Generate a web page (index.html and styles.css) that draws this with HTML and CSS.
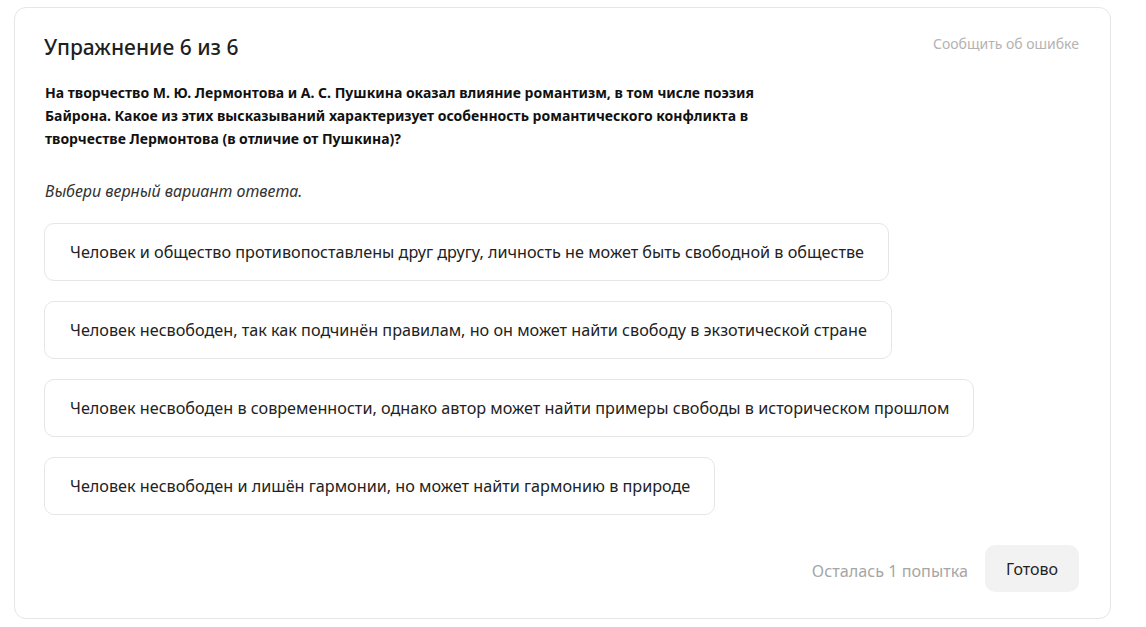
FILE: index.html
```html
<!DOCTYPE html>
<html lang="ru">
<head>
    <meta charset="UTF-8">
    <meta name="viewport" content="width=device-width, initial-scale=1.0">
    <title>Упражнение 6 из 6</title>
    <link rel="stylesheet" href="styles.css">
</head>
<body>
    <div class="card">
        <div class="card-head">
            <h1 class="title">Упражнение 6 из 6</h1>
            <a class="report" href="#">Сообщить об ошибке</a>
        </div>

        <p class="question">На творчество М. Ю. Лермонтова и А. С. Пушкина оказал влияние романтизм, в том числе поэзия Байрона. Какое из этих высказываний характеризует особенность романтического конфликта в творчестве Лермонтова (в отличие от Пушкина)?</p>

        <p class="hint">Выбери верный вариант ответа.</p>

        <div class="options">
            <button class="option">Человек и общество противопоставлены друг другу, личность не может быть свободной в обществе</button>
            <button class="option">Человек несвободен, так как подчинён правилам, но он может найти свободу в экзотической стране</button>
            <button class="option">Человек несвободен в современности, однако автор может найти примеры свободы в историческом прошлом</button>
            <button class="option">Человек несвободен и лишён гармонии, но может найти гармонию в природе</button>
        </div>

        <div class="card-foot">
            <span class="attempts">Осталась 1 попытка</span>
            <button class="done">Готово</button>
        </div>
    </div>
</body>
</html>
```

FILE: styles.css
```css
* {
    box-sizing: border-box;
}
body {
    margin: 0;
    padding: 7px 35px 8px 14px;
    font-family: "Noto Sans", "Open Sans", sans-serif;
    color: #222;
    background: #fff;
}
.card {
    border: 1px solid #e6e6e6;
    border-radius: 12px;
    padding: 24px 30px 25px 29px;
    height: 612px;
}
.card-head {
    display: flex;
    justify-content: space-between;
    align-items: flex-start;
}
.title {
    margin: 0;
    font-size: 21px;
    font-weight: 500;
    line-height: 30px;
    color: #1f1f1f;
}
.report {
    font-size: 14px;
    color: #b3b3b3;
    text-decoration: none;
    line-height: 20px;
    margin-top: 2px;
    margin-right: 1px;
}
.question {
    margin: 19px 0 0 1px;
    max-width: 760px;
    font-size: 14px;
    font-weight: 700;
    line-height: 23px;
    color: #111;
}
.hint {
    margin: 29px 0 0 1px;
    font-size: 16px;
    font-style: italic;
    color: #333;
    line-height: 24px;
}
.options {
    display: flex;
    flex-direction: column;
    align-items: flex-start;
    gap: 20px;
    margin-top: 20px;
}
.option {
    font-family: inherit;
    font-size: 16.2px;
    color: #222;
    background: #fff;
    border: 1px solid #e6e6e6;
    border-radius: 10px;
    height: 58px;
    padding: 0 24px 0 25px;
    text-align: left;
    cursor: pointer;
}
.card-foot {
    display: flex;
    justify-content: flex-end;
    align-items: center;
    gap: 17px;
    margin-top: 30px;
    padding-right: 1px;
}
.attempts {
    font-size: 16.2px;
    color: #a6a6a6;
    margin-top: 4px;
}
.done {
    font-family: inherit;
    font-size: 16px;
    color: #1f1f1f;
    background: #f2f2f2;
    border: none;
    border-radius: 10px;
    width: 94px;
    height: 47px;
    cursor: pointer;
}
```
